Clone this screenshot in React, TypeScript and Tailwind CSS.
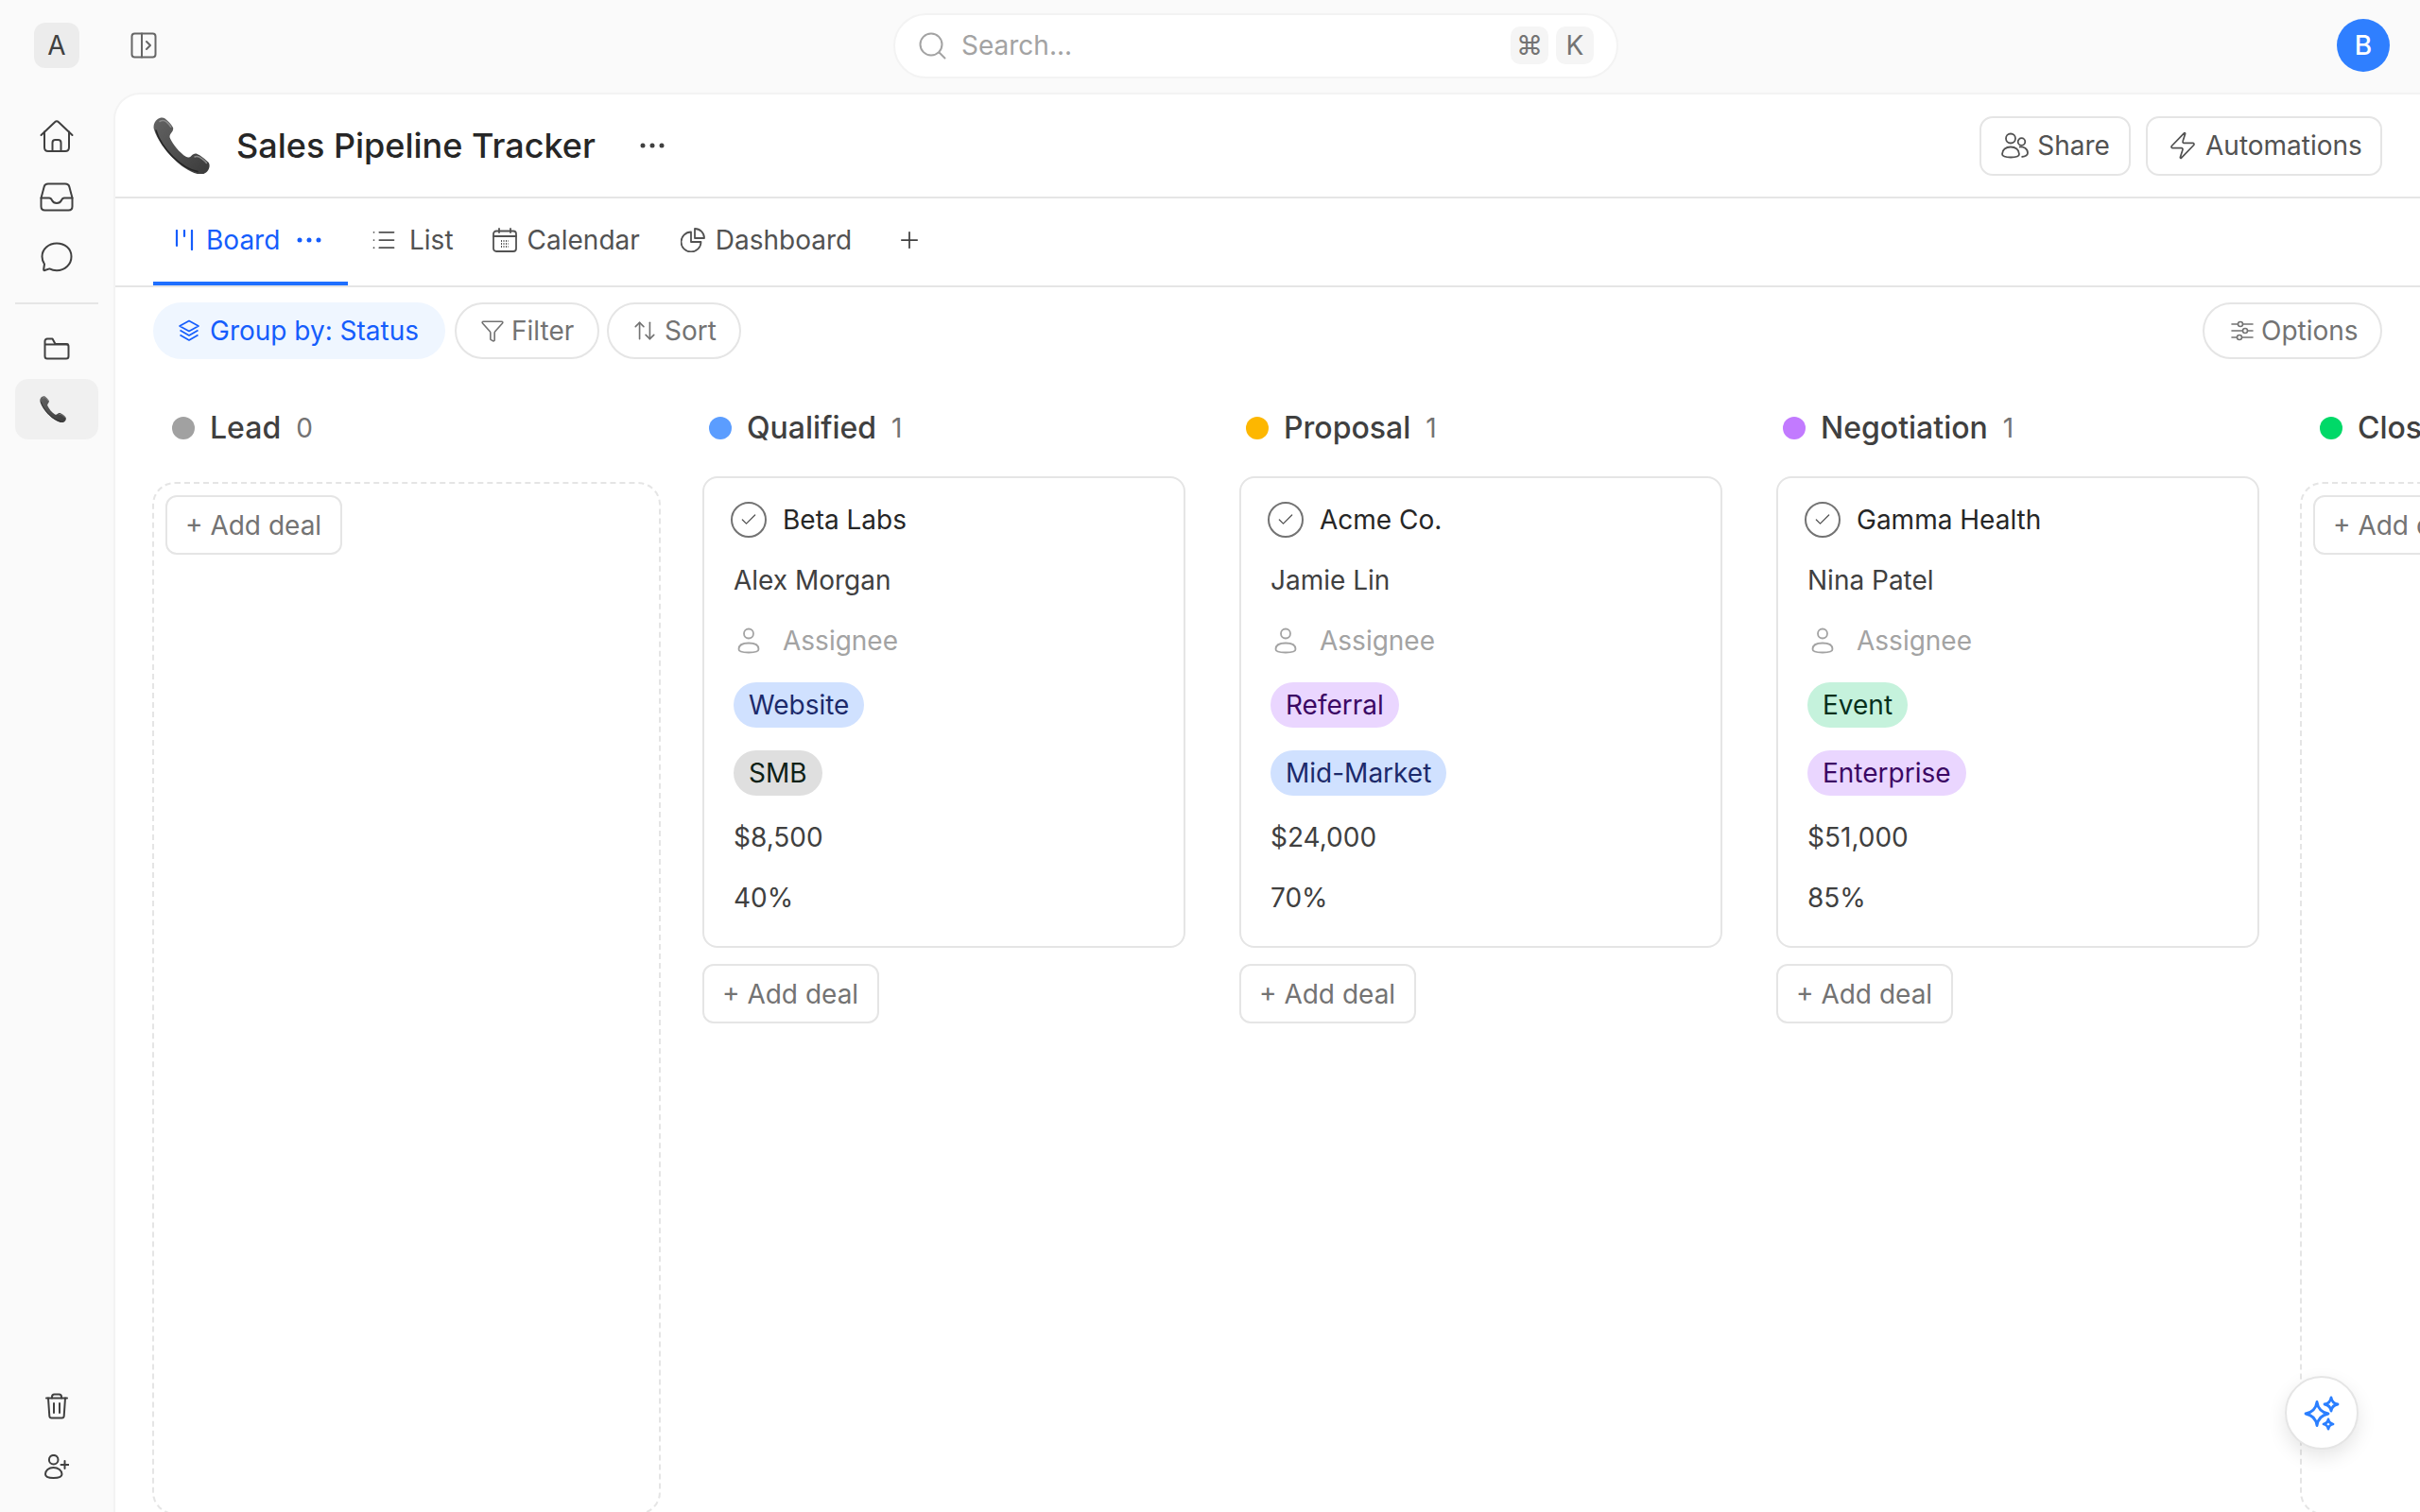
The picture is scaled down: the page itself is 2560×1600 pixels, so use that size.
import { Check, List, Plus, Zap, Funnel, ArrowUpDown } from 'lucide-react';

const deals: Record<string, { company: string; contact: string; tags: { label: string; cls: string }[]; amount: string; prob: string }> = {
  Qualified: {
    company: 'Beta Labs',
    contact: 'Alex Morgan',
    tags: [
      { label: 'Website', cls: 'bg-[#d0e1ff] text-[#1c2a6b]' },
      { label: 'SMB', cls: 'bg-[#dfdfdf] text-[#0d2116]' },
    ],
    amount: '$8,500',
    prob: '40%',
  },
  Proposal: {
    company: 'Acme Co.',
    contact: 'Jamie Lin',
    tags: [
      { label: 'Referral', cls: 'bg-[#ead6ff] text-[#3b0764]' },
      { label: 'Mid-Market', cls: 'bg-[#d0e1ff] text-[#1c2a6b]' },
    ],
    amount: '$24,000',
    prob: '70%',
  },
  Negotiation: {
    company: 'Gamma Health',
    contact: 'Nina Patel',
    tags: [
      { label: 'Event', cls: 'bg-[#c5f2dc] text-[#06301c]' },
      { label: 'Enterprise', cls: 'bg-[#ead6ff] text-[#3b0764]' },
    ],
    amount: '$51,000',
    prob: '85%',
  },
};

const columns = [
  { name: 'Lead', count: 0, dot: 'bg-[#a1a1a1]' },
  { name: 'Qualified', count: 1, dot: 'bg-[#5b9dff]' },
  { name: 'Proposal', count: 1, dot: 'bg-[#fdb700]' },
  { name: 'Negotiation', count: 1, dot: 'bg-[#c27aff]' },
  { name: 'Closed', count: 0, dot: 'bg-[#00d968]' },
];

function PhoneEmoji({ size, className }: { size: number; className?: string }) {
  return (
    <svg width={size} height={size} viewBox="0 0 60 60" className={`shrink-0 ${className ?? ''}`}>
      <defs>
        <linearGradient id="handset" x1="0" y1="0" x2="1" y2="1">
          <stop offset="0" stopColor="#636363" />
          <stop offset="1" stopColor="#3a3a3a" />
        </linearGradient>
      </defs>
      <path
        d="M4.5 2.2C7 .2 10.5-.2 12.6 1.4c3 2.4 6.6 6 8.3 9.4.9 2-.2 4-1.6 5.6-1.3 1.5-2.2 3.4-1.6 5.3 3.2 7.2 9.8 15.4 17.4 20.4 2 1 3.8.2 5.2-1.2 1.5-1.5 3.6-2.8 5.8-2.2 3.8 1.4 9.4 6 12.6 9.4 1.4 2 1.2 5.4-.6 8.2-2 3-5.4 4.6-9 4.2-9.6-1.6-19.6-8.4-27.4-16.4C13.6 36.500 4 23.500.8 12.600-.2 8.600 1.500 4.400 4.500 2.200Z"
        fill="url(#handset)"
      />
      <path d="M7 4.500c2.500-1.500 5-1.200 7 .4 2 1.700 3.800 3.500 4.800 5.400" fill="none" stroke="#8b8b8b" strokeWidth="1.500" strokeLinecap="round" />
      <path d="M44 42c2.500-1.400 5 0 7.500 1.800 2 1.500 3.800 3 5 4.700" fill="none" stroke="#8b8b8b" strokeWidth="1.500" strokeLinecap="round" />
      <path d="M3 14c3 10 11 21 18 28 7.500 7.500 16 13.500 26 15.500" fill="none" stroke="#242424" strokeWidth="1.500" strokeLinecap="round" />
    </svg>
  );
}

function Dots({ className }: { className?: string }) {
  return (
    <svg width="26" height="6" viewBox="0 0 26 6" fill="currentColor" className={className}>
      <circle cx="3" cy="3" r="2.500" />
      <circle cx="13" cy="3" r="2.500" />
      <circle cx="23" cy="3" r="2.500" />
    </svg>
  );
}

function HomeIcon() {
  return (
    <svg width="36" height="36" viewBox="0 0 36 36" fill="none" stroke="currentColor" strokeWidth="2" strokeLinecap="round" strokeLinejoin="round">
      <path d="M1.500 17 16 3.200q2-1.800 4 0L34.500 17" />
      <path d="M5 13.500V30q0 4 4 4h18q4 0 4-4V13.500" />
      <path d="M13.500 34V25q0-3 3-3h3q3 0 3 3v9" />
    </svg>
  );
}

function InboxIcon() {
  return (
    <svg width="36" height="31" viewBox="0 0 36 31" fill="none" stroke="currentColor" strokeWidth="2" strokeLinecap="round" strokeLinejoin="round">
      <path d="M9 1.500h18q3.500 0 4.300 3l3.200 12v9q0 4-4 4h-25q-4 0-4-4v-9l3.200-12Q5.500 1.500 9 1.500Z" />
      <path d="M1.500 16.500h8.500q2 0 3 2.500 1.500 3 5 3t5-3q1-2.500 3-2.500h8.500" />
    </svg>
  );
}

function ChatIcon() {
  return (
    <svg width="34" height="32" viewBox="0 0 34 32" fill="none" stroke="currentColor" strokeWidth="2" strokeLinejoin="round">
      <path d="M17 1.500C8.500 1.500 1.500 7.500 1.500 15.500c0 3 .8 5.500 2.500 8L3.200 29q-.2 1.500 1.200 1l5-1.600c2.300 1.200 4.800 1.800 7.600 1.800 8.500 0 15.500-6.200 15.500-14.700S25.500 1.500 17 1.500Z" />
    </svg>
  );
}

function FolderIcon() {
  return (
    <svg width="28" height="24" viewBox="0 0 28 24" fill="none" stroke="currentColor" strokeWidth="2" strokeLinejoin="round">
      <path d="M1.500 20V4A2.500 2.500 0 0 1 4 1.500h5.500l3 5.500H24A2.500 2.500 0 0 1 26.500 9.500V20a2.500 2.500 0 0 1-2.500 2.500H4A2.500 2.500 0 0 1 1.500 20Z" />
      <path d="M1.500 7.500h25" />
    </svg>
  );
}

function TrashIcon() {
  return (
    <svg width="24" height="28" viewBox="0 0 24 28" fill="none" stroke="currentColor" strokeWidth="2" strokeLinecap="round" strokeLinejoin="round">
      <path d="M1 5.500h22" />
      <path d="M7 5.500V4q0-2.500 2.500-2.500h5Q17 1.500 17 4v1.500" />
      <path d="M3 5.500l1.300 19q.2 2 2.200 2h11q2 0 2.200-2l1.300-19" />
      <path d="M9 11v10M15 11v10" />
    </svg>
  );
}

function AddUserIcon() {
  return (
    <svg width="26" height="26" viewBox="0 0 26 26" fill="none" stroke="currentColor" strokeWidth="2" strokeLinecap="round">
      <circle cx="9.700" cy="5.700" r="4.800" />
      <path d="M1 21c0-4 3.500-7 8.500-7s9 3 9 7c0 2.800-4.500 4-9 4s-8.500-1.200-8.500-4Z" />
      <path d="M21.500 7v8M17.500 11h8" />
    </svg>
  );
}

function AddDeal() {
  return (
    <button className="h-[63px] w-[187px] rounded-[12px] border-2 border-[#e5e5e5] bg-white pl-[19px] text-left text-[28px] leading-none text-[#737373]">
      + Add deal
    </button>
  );
}

function DealCard({ deal }: { deal: (typeof deals)[string] }) {
  return (
    <div className="w-[511px] rounded-[16px] border-2 border-[#e5e5e5] bg-white pt-3 pb-[19px] pl-[31px] text-[28px]">
      <div className="-ml-[3px] flex h-16 items-center gap-[17px] text-[#262626]">
        <span className="flex h-[38px] w-[38px] items-center justify-center rounded-full border-2 border-[#737373]">
          <Check size={20} strokeWidth={1.5} className="text-[#525252]" />
        </span>
        {deal.company}
      </div>
      <div className="flex h-16 items-center text-[#404040]">{deal.contact}</div>
      <div className="flex h-16 items-center text-[#a3a3a3]">
        <svg width="24" height="28" viewBox="0 0 24 28" fill="none" stroke="#a3a3a3" strokeWidth="1.800" className="ml-[4px] mr-[24px]">
          <circle cx="12" cy="6.500" r="5" />
          <path d="M1.500 23c0-4.500 4.500-6.500 10.500-6.500S22.500 18.500 22.500 23c0 2-2.500 3.500-10.500 3.500S1.500 25 1.500 23Z" />
        </svg>
        Assignee
      </div>
      {deal.tags.map((t) => (
        <div key={t.label} className="flex h-[72px] items-center">
          <span className={`flex h-12 items-center rounded-full px-4 ${t.cls}`}>{t.label}</span>
        </div>
      ))}
      <div className="flex h-16 items-center text-[#404040]">{deal.amount}</div>
      <div className="flex h-16 items-center text-[#404040]">{deal.prob}</div>
    </div>
  );
}

function BoardColumn({ col }: { col: (typeof columns)[number] }) {
  const deal = deals[col.name];
  return (
    <div className="flex h-full w-[568px] shrink-0 flex-col">
      <div className="flex h-14 items-center pl-[20px]">
        <span className={`h-6 w-6 rounded-full ${col.dot}`} />
        <span className="ml-4 text-[32px] font-medium text-[#404040]">{col.name}</span>
        <span className="ml-4 text-[28px] text-[#737373]">{col.count}</span>
      </div>
      {deal ? (
        <div className="ml-[13px] mt-[23px] flex flex-col gap-[17px]">
          <DealCard deal={deal} />
          <div>
            <AddDeal />
          </div>
        </div>
      ) : (
        <div className="-mb-[3px] -ml-px mt-[29px] w-[538px] flex-1 rounded-[24px] border-2 border-dashed border-[#e5e5e5] pl-[12px] pt-3">
          <AddDeal />
        </div>
      )}
    </div>
  );
}

export default function App() {
  return (
    <div className="relative flex h-screen w-screen flex-col overflow-hidden bg-[#fafafa] font-[Inter,sans-serif]">
      {/* Top bar */}
      <div className="flex h-[98px] shrink-0 items-center pb-[2px]">
        <div className="flex w-[945px] items-center pl-[36px]">
          <div className="flex h-12 w-12 items-center justify-center rounded-[12px] bg-[#ececec] text-[28px] text-[#404040]">A</div>
          <svg width="28" height="28" viewBox="0 0 28 28" fill="none" stroke="#666" strokeWidth="2" className="ml-[54px]" strokeLinejoin="round">
            <rect x="1.500" y="1.500" width="25" height="25" rx="3" />
            <path d="M12 1.500v25M17 10l4 4-4 4" strokeLinecap="round" />
          </svg>
        </div>
        <div className="flex h-[69px] w-[767px] items-center rounded-full border-2 border-[#f3f3f3] bg-white pl-[24px] pr-[24px]">
          <svg width="30" height="30" viewBox="0 0 30 30" fill="none" stroke="#a3a3a3" strokeWidth="2" strokeLinecap="round">
            <circle cx="14" cy="14" r="11.500" />
            <path d="M22.500 22.500l6 6" />
          </svg>
          <span className="ml-4 text-[28px] text-[#a3a3a3]">Search...</span>
          <span className="ml-auto flex h-10 w-10 items-center justify-center rounded-[10px] bg-[#f5f5f5] text-[28px] text-[#737373]">⌘</span>
          <span className="ml-2 flex h-10 w-10 items-center justify-center rounded-[10px] bg-[#f5f5f5] text-[28px] text-[#737373]">K</span>
        </div>
        <div className="flex flex-1 justify-end pr-8">
          <div className="flex h-14 w-14 items-center justify-center rounded-full bg-[#2f7fff] text-[28px] font-medium text-white">B</div>
        </div>
      </div>

      <div className="flex min-h-0 flex-1">
        {/* Sidebar */}
        <div className="flex w-[120px] shrink-0 flex-col items-center pt-[14px] pb-4 text-[#404040]">
          <div className="flex h-16 items-center"><HomeIcon /></div>
          <div className="flex h-16 items-center"><InboxIcon /></div>
          <div className="flex h-16 items-center"><ChatIcon /></div>
          <div className="mt-4 mb-[15px] h-[2px] w-[88px] shrink-0 bg-[#e5e5e5]" />
          <div className="flex h-16 items-center"><FolderIcon /></div>
          <div className="flex h-16 w-[88px] items-center justify-center rounded-[14px] bg-[#f0f0f0]">
            <PhoneEmoji size={28} className="-ml-[9px]" />
          </div>
          <div className="mt-auto flex h-16 items-center"><TrashIcon /></div>
          <div className="flex h-16 items-center"><AddUserIcon /></div>
        </div>

        {/* Main */}
        <div className="flex min-w-0 flex-1 flex-col overflow-hidden rounded-tl-[28px] border-t-2 border-l-2 border-[#f3f3f3] bg-white">
          <div className="flex h-[110px] shrink-0 items-center border-b-2 border-[#e5e5e5] pl-10 pr-10">
            <PhoneEmoji size={60} />
            <h1 className="ml-[28px] -mt-[1px] text-[36px] font-medium text-[#262626]">Sales Pipeline Tracker</h1>
            <Dots className="ml-[47px] text-[#404040]" />
            <div className="ml-auto flex gap-4">
              <button className="flex h-[63px] w-[160px] items-center justify-center gap-[9px] rounded-[14px] border-2 border-[#e5e5e5] text-[28px] text-[#525252]">
                <svg width="30" height="28" viewBox="0 0 30 28" fill="none" stroke="#525252" strokeWidth="1.800">
                  <circle cx="11" cy="6.500" r="5" />
                  <circle cx="22.500" cy="10" r="3.800" />
                  <path d="M2 23c0-4.500 4-7.500 9-7.500s9 3 9 7.500c0 2-3 3.500-9 3.500S2 25 2 23Z" />
                  <path d="M20 15.500c5-.6 9 2 9 6.500 0 2-2 3.500-6.500 4" />
                </svg>
                Share
              </button>
              <button className="flex h-[63px] w-[250px] items-center gap-2 rounded-[14px] border-2 border-[#e5e5e5] pl-[21px] text-[28px] text-[#525252]">
                <Zap size={32} strokeWidth={1.300} />
                Automations
              </button>
            </div>
          </div>

          <div className="flex h-[94px] shrink-0 items-stretch border-b-2 border-[#e5e5e5] pl-10 text-[28px] text-[#525252]">
            <div className="flex w-[206px] items-center border-b-4 border-[#1f6fff] pl-[23px] text-[#155dfc]">
              <svg width="20" height="22" viewBox="0 0 20 22" fill="none" stroke="#155dfc" strokeWidth="2.200" strokeLinecap="round">
                <path d="M2 1v16M10 1v6M18 1v20" />
              </svg>
              <span className="ml-[13px]">Board</span>
              <Dots className="ml-[18px]" />
            </div>
            <div className="ml-6 flex items-center gap-[13px] pb-1">
              <List size={28} strokeWidth={1.500} />
              List
            </div>
            <div className="ml-[41px] flex items-center gap-[11px] pb-1">
              <svg width="26" height="26" viewBox="0 0 26 26" fill="none" stroke="#525252" strokeWidth="1.800" strokeLinecap="round">
                <rect x="1" y="3.500" width="24" height="21.500" rx="3" />
                <path d="M1 9h24M7 1v4M19 1v4" />
                <path d="M9 14h8M9 17h8M9 20h8" strokeDasharray="1 1.500" strokeLinecap="butt" />
              </svg>
              Calendar
            </div>
            <div className="ml-[43px] flex items-center gap-[11px] pb-1">
              <svg width="26" height="26" viewBox="0 0 26 26" fill="none" stroke="#525252" strokeWidth="1.800" strokeLinejoin="round">
                <path d="M11 4.500a10.500 10.500 0 1 0 10.500 10.500H11V4.500Z" />
                <path d="M15 1a10 10 0 0 1 10 10H15V1Z" />
              </svg>
              Dashboard
            </div>
            <div className="ml-[47px] flex items-center pb-1">
              <Plus size={28} strokeWidth={1.500} className="text-[#404040]" />
            </div>
          </div>

          <div className="flex shrink-0 items-center pl-10 pr-10 pt-[16px] text-[28px] text-[#737373]">
            <div className="flex h-[60px] w-[309px] items-center gap-[10px] rounded-full bg-[#eff6ff] pl-[26px] text-[#155dfc]">
              <svg width="24" height="24" viewBox="0 0 24 24" fill="none" stroke="#155dfc" strokeWidth="1.600" strokeLinejoin="round">
                <path d="M12 1.500 22 7l-10 5.500L2 7l10-5.500Z" />
                <path d="M2.500 11.500 12 17l9.500-5.500M2.500 16.500 12 22l9.500-5.500" />
              </svg>
              Group by: Status
            </div>
            <div className="ml-[10px] flex h-[60px] w-[153px] items-center gap-[7px] rounded-full border-2 border-[#e5e5e5] pl-[25px]">
              <Funnel size={26} strokeWidth={1.500} />
              Filter
            </div>
            <div className="ml-[8px] flex h-[60px] w-[142px] items-center gap-[8px] rounded-full border-2 border-[#e5e5e5] pl-[25px]">
              <ArrowUpDown size={26} strokeWidth={1.500} />
              Sort
            </div>
            <div className="ml-auto flex h-[60px] w-[190px] items-center gap-2 rounded-full border-2 border-[#e5e5e5] pl-[28px]">
              <svg width="24" height="22" viewBox="0 0 24 22" fill="none" stroke="#737373" strokeWidth="1.600" strokeLinecap="round">
                <path d="M1 4h6M13 4h10M1 11h11M18 11h5M1 18h5M12 18h11" />
                <circle cx="10" cy="4" r="2.500" />
                <circle cx="15" cy="11" r="2.500" />
                <circle cx="9" cy="18" r="2.500" />
              </svg>
              Options
            </div>
          </div>

          <div className="mt-[45px] flex min-h-0 flex-1 overflow-hidden pl-10">
            {columns.map((c) => (
              <BoardColumn key={c.name} col={c} />
            ))}
          </div>
        </div>
      </div>

      {/* Assistant button */}
      <button className="absolute left-[2417px] top-[1456px] flex h-[78px] w-[78px] items-center justify-center rounded-full border-2 border-[#e5e5e5] bg-white shadow-[0_8px_20px_rgba(0,0,0,0.1)]">
        <svg width="38" height="39" viewBox="0 0 38 39" fill="none" stroke="#2b7fff" strokeWidth="2.800" strokeLinejoin="round">
          <path d="M14 7.500Q15.500 18 26 20 15.500 22 14 32.500 12.500 22 2 20 12.500 18 14 7.500Z" />
          <path d="M29 3Q30 9 36 10 30 11 29 17 28 11 22 10 28 9 29 3Z" />
          <path d="M26 26Q26.700 30 31 31 26.700 32 26 36 25.300 32 21 31 25.300 30 26 26Z" />
        </svg>
      </button>
    </div>
  );
}
